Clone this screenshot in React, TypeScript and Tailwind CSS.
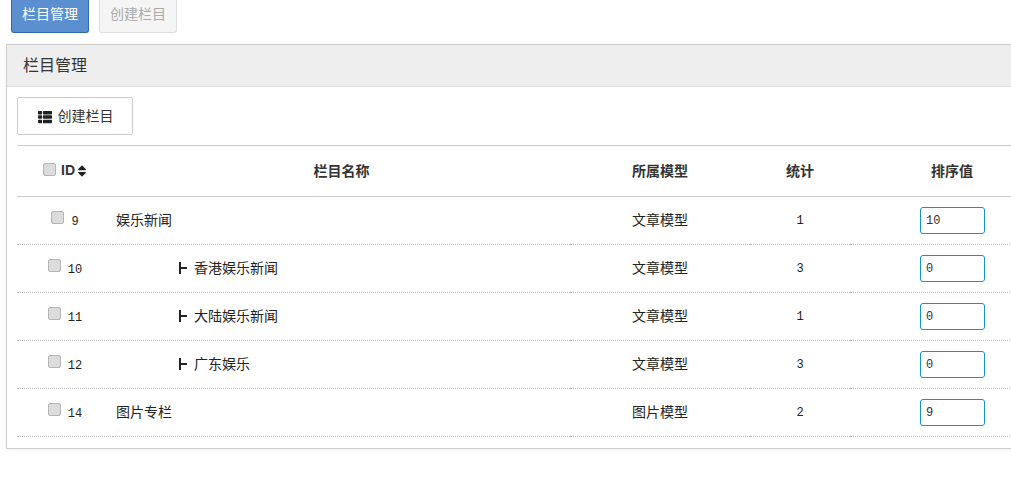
import { FaSort, FaThList } from "react-icons/fa";

type Row = {
  id: number;
  name: string;
  child?: boolean;
  model: string;
  count: number;
  sort: number;
};

const rows: Row[] = [
  { id: 9, name: "娱乐新闻", model: "文章模型", count: 1, sort: 10 },
  { id: 10, name: "香港娱乐新闻", child: true, model: "文章模型", count: 3, sort: 0 },
  { id: 11, name: "大陆娱乐新闻", child: true, model: "文章模型", count: 1, sort: 0 },
  { id: 12, name: "广东娱乐", child: true, model: "文章模型", count: 3, sort: 0 },
  { id: 14, name: "图片专栏", model: "图片模型", count: 2, sort: 9 },
];

function Check() {
  return (
    <span className="inline-block w-[13px] h-[13px] rounded-[2px] border border-[#b4b4b4] bg-[#dcdcdc] align-[1px]" />
  );
}

export default function App() {
  return (
    <div className="w-[1011px] h-[482px] overflow-hidden bg-white font-['Liberation_Sans','Noto_Sans_CJK_SC',sans-serif] text-[14px] text-[#333]">
      <div className="flex gap-[10px] pl-[11px] h-[33px]">
        <a className="w-[78px] h-[33px] pb-[3px] flex items-center justify-center rounded-b-[3px] border border-[#2e6da4] border-t-0 bg-[#5b8fd0] text-white">
          栏目管理
        </a>
        <a className="w-[78px] h-[33px] pb-[3px] flex items-center justify-center rounded-b-[3px] border border-[#ddd] border-t-0 bg-[#f5f5f5] text-[#aaa]">
          创建栏目
        </a>
      </div>
      <div className="mt-[11px] ml-[6px] w-[1100px] h-[405px] border border-[#ccc] shadow-[0_1px_6px_rgba(0,0,0,0.05)]">
        <div className="h-[42px] pl-4 pt-px flex items-center bg-[#eee] border-b border-[#ddd] text-[16px] text-[#333]">
          栏目管理
        </div>
        <div className="pt-[10px] pl-[10px]">
          <button className="w-[116px] h-[38px] pl-px pt-px flex items-center justify-center gap-[6px] rounded-[2px] border border-[#ccc] bg-white text-[14px] text-[#333]">
            <FaThList className="w-[14px] h-[14px] text-[#222]" />
            创建栏目
          </button>
          <table className="mt-[10px] w-[1037px] table-fixed border-collapse">
            <colgroup>
              <col className="w-[96px]" />
              <col className="w-[457px]" />
              <col className="w-[180px]" />
              <col className="w-[100px]" />
              <col className="w-[204px]" />
            </colgroup>
            <thead>
              <tr className="h-[51px] border-y border-[#ccc] font-bold">
                <th className="text-center">
                  <span className="inline-flex items-center gap-[5px]">
                    <span className="-mt-[3px] flex">
                      <Check />
                    </span>
                    <span className="font-bold">ID</span>
                    <FaSort className="w-[10px] h-[14px] -ml-[3px] text-[#222]" />
                  </span>
                </th>
                <th>栏目名称</th>
                <th>所属模型</th>
                <th>统计</th>
                <th>排序值</th>
              </tr>
            </thead>
            <tbody>
              {rows.map((row) => (
                <tr key={row.id} className="h-[48px] border-b border-dotted border-[#bbb] text-[#222]">
                  <td className="text-center text-[12px] font-['Liberation_Mono']">
                    <Check />
                    <span className="ml-[7px]">{row.id}</span>
                  </td>
                  <td className="pl-[3px]">
                    {row.child && (
                      <span className="ml-[63px] mr-[7px] inline-flex items-center align-[-1px]">
                        <span className="w-[2px] h-3 bg-[#222]" />
                        <span className="w-[6px] h-[2px] bg-[#222]" />
                      </span>
                    )}
                    {row.name}
                  </td>
                  <td className="text-center">{row.model}</td>
                  <td className="text-center text-[12px] font-['Liberation_Mono']">{row.count}</td>
                  <td className="pl-[70px]">
                    <input
                      readOnly
                      value={row.sort}
                      className="block w-[65px] h-[27px] pl-[5px] rounded-[3px] border border-[#1196b9] bg-white text-[12px] font-['Liberation_Mono'] text-[#333] outline-none"
                    />
                  </td>
                </tr>
              ))}
            </tbody>
          </table>
        </div>
      </div>
    </div>
  );
}
